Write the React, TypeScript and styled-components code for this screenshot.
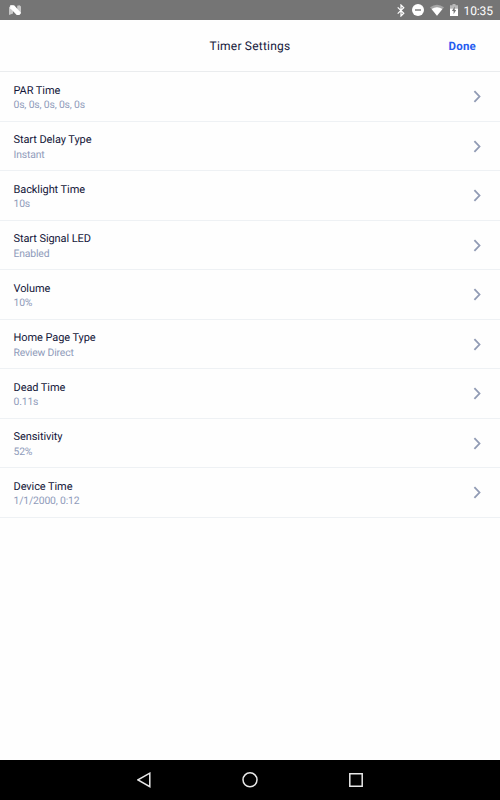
import React from "react";
import styled, { createGlobalStyle } from "styled-components";

const GlobalStyle = createGlobalStyle`
  * { box-sizing: border-box; }
  body {
    margin: 0;
    background: #fff;
    font-family: Roboto, "Liberation Sans", sans-serif;
    text-rendering: geometricPrecision;
  }
`;

const Screen = styled.div`
  display: flex;
  flex-direction: column;
  width: 500px;
  height: 800px;
  background: #fefefe;
  overflow: hidden;
`;

const StatusBar = styled.div`
  flex: none;
  display: flex;
  align-items: center;
  justify-content: space-between;
  height: 20px;
  padding: 0 7px 0 8px;
  background: #757575;
  color: #fff;
`;

const StatusIcons = styled.div`
  display: flex;
  align-items: center;
  height: 20px;
`;

const Glyph = styled.svg<{ $gap?: number }>`
  display: block;
  flex: none;
  margin-right: ${(p) => p.$gap ?? 0}px;
`;

const Clock = styled.span`
  font-size: 12px;
  letter-spacing: -0.1px;
  line-height: 20px;
  padding-top: 1px;
  width: 29.5px;
  white-space: nowrap;
`;

const Header = styled.header`
  flex: none;
  display: grid;
  grid-template-columns: 1fr auto 1fr;
  align-items: center;
  height: 52px;
  padding: 0 24px;
  border-bottom: 1px solid #eaecee;
`;

const Title = styled.h1`
  grid-column: 2;
  margin: 0;
  font-size: 12px;
  font-weight: 400;
  line-height: 16px;
  letter-spacing: 0.22px;
  color: #14173a;
  padding-top: 1px;
`;

const Done = styled.button`
  justify-self: end;
  border: 0;
  padding: 1px 0 0;
  background: none;
  font: 700 11.5px/16px Roboto, "Liberation Sans", sans-serif;
  text-rendering: geometricPrecision;
  letter-spacing: 0.2px;
  color: #265cf0;
`;

const List = styled.ul`
  flex: 1;
  margin: 0;
  padding: 0;
  list-style: none;
`;

const Row = styled.li`
  display: flex;
  align-items: center;
  justify-content: space-between;
  height: 49.56px;
  padding: 0.6px 19px 0 13.5px;
  border-bottom: 1px solid #eef1f4;
`;

const Texts = styled.div`
  padding-top: 2.6px;
`;

const Label = styled.div`
  font-size: 11px;
  line-height: 14.5px;
  letter-spacing: -0.08px;
  color: #14173a;
`;

const Value = styled.div`
  font-size: 10.4px;
  line-height: 14.2px;
  letter-spacing: -0.17px;
  color: #8f9bba;
`;

const NavBar = styled.nav`
  flex: none;
  display: flex;
  align-items: center;
  justify-content: center;
  gap: 91px;
  height: 40px;
  background: #000;
`;

const settings = [
  ["PAR Time", "0s, 0s, 0s, 0s, 0s"],
  ["Start Delay Type", "Instant"],
  ["Backlight Time", "10s"],
  ["Start Signal LED", "Enabled"],
  ["Volume", "10%"],
  ["Home Page Type", "Review Direct"],
  ["Dead Time", "0.11s"],
  ["Sensitivity", "52%"],
  ["Device Time", "1/1/2000, 0:12"],
];

const Chevron = () => (
  <Glyph width="8" height="13" viewBox="0 0 8 13" fill="none" stroke="#919bb4" strokeWidth="1.8">
    <path d="M1.4 1.2 6.5 6.5 1.4 11.8" />
  </Glyph>
);

export default function App() {
  return (
    <Screen>
      <GlobalStyle />
      <StatusBar>
        <Glyph width="14" height="12" viewBox="0 0 14 12">
          <path d="M1 3.2 3 1.4h2v8.2L1 10.9z" fill="#c8c8c8" />
          <path d="M9.2 1.7 11.5 1.2 13 2.4V9.6l-1.7 1.3-2.1-2z" fill="#c8c8c8" />
          <path d="M2.2 1.2h3.9l6.8 7.6-1.6 2.1H8.7L2.2 4.2z" fill="#fff" />
        </Glyph>
        <StatusIcons>
          <Glyph $gap={6.5} width="8" height="13" viewBox="0 0 8 13" fill="none" stroke="#fff" strokeWidth="1.2">
            <path d="m.7 3.4 6.1 5.8L4 12V1l2.8 2.8L.7 9.6" />
          </Glyph>
          <Glyph $gap={6} width="12" height="12" viewBox="0 0 12 12">
            <circle cx="6" cy="6" r="6" fill="#fff" />
            <path d="M3 6h6" stroke="#757575" strokeWidth="1.4" />
          </Glyph>
          <Glyph $gap={6} width="14" height="12" viewBox="0 0 14 12">
            <path d="M0 3.3Q7-1.8 14 3.3L7 11.8z" fill="#a5a5a5" />
            <path d="M1.6 4.9Q7 1.4 12.4 4.9L7 11.8z" fill="#fff" />
          </Glyph>
          <Glyph $gap={6} width="8" height="12" viewBox="0 0 8 12">
            <path d="M0 1.3h2.5V0h3v1.3H8V5H0z" fill="#b8b8b8" />
            <path d="M0 4.7h8V12H0z" fill="#fff" />
            <path d="M4.7 2.5 1.9 7h1.7v3.2L6.2 6H4.7z" fill="#757575" />
          </Glyph>
          <Clock>10:35</Clock>
        </StatusIcons>
      </StatusBar>
      <Header>
        <Title>Timer Settings</Title>
        <Done>Done</Done>
      </Header>
      <List>
        {settings.map(([label, value]) => (
          <Row key={label}>
            <Texts>
              <Label>{label}</Label>
              <Value>{value}</Value>
            </Texts>
            <Chevron />
          </Row>
        ))}
      </List>
      <NavBar>
        <Glyph width="14" height="16" viewBox="0 0 14 16" fill="none" stroke="#e8e8e8" strokeWidth="1.5">
          <path d="M12.8 1.2v13.4L1 7.9z" />
        </Glyph>
        <Glyph width="16" height="16" viewBox="0 0 16 16" fill="none" stroke="#e8e8e8" strokeWidth="1.5">
          <circle cx="8" cy="7.8" r="7" />
        </Glyph>
        <Glyph width="14" height="14" viewBox="0 0 14 14" fill="none" stroke="#e8e8e8" strokeWidth="1.5">
          <path d="M.8.8h12.4v12.4H.8z" />
        </Glyph>
      </NavBar>
    </Screen>
  );
}
